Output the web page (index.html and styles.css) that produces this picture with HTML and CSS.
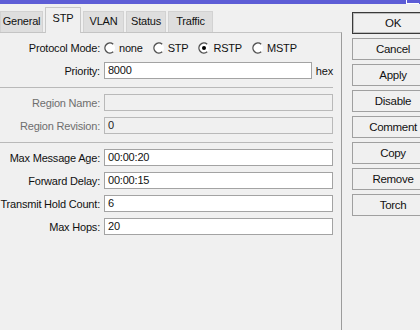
FILE: index.html
```html
<!DOCTYPE html>
<html lang="en">
<head>
  <meta charset="UTF-8">
  <title>Bridge Port - STP</title>
  <link rel="stylesheet" href="styles.css">
</head>
<body>
  <div class="titlebar">
    <span class="title-close"></span>
  </div>

  <div class="window">
    <!-- left side: tabs + form -->
    <div class="main">
      <div class="tabs">
        <div class="tab tab-general">General</div>
        <div class="tab tab-stp active">STP</div>
        <div class="tab tab-vlan">VLAN</div>
        <div class="tab tab-status">Status</div>
        <div class="tab tab-traffic">Traffic</div>
      </div>

      <div class="panel">
        <div class="row">
          <label class="label">Protocol Mode:</label>
          <div class="radios">
            <span class="radio">
              <svg width="12" height="12" viewBox="0 0 12 12"><circle cx="6" cy="6" r="5" fill="#fff"/><path d="M9.2 2.2 A5 5 0 1 0 9.2 9.8" fill="none" stroke="#505050" stroke-width="1.4"/></svg>
              none
            </span>
            <span class="radio">
              <svg width="12" height="12" viewBox="0 0 12 12"><circle cx="6" cy="6" r="5" fill="#fff"/><path d="M9.2 2.2 A5 5 0 1 0 9.2 9.8" fill="none" stroke="#505050" stroke-width="1.4"/></svg>
              STP
            </span>
            <span class="radio">
              <svg width="12" height="12" viewBox="0 0 12 12"><circle cx="6" cy="6" r="5" fill="#fff"/><path d="M9.2 2.2 A5 5 0 1 0 9.2 9.8" fill="none" stroke="#505050" stroke-width="1.4"/><circle cx="6" cy="6" r="2" fill="#000"/></svg>
              RSTP
            </span>
            <span class="radio">
              <svg width="12" height="12" viewBox="0 0 12 12"><circle cx="6" cy="6" r="5" fill="#fff"/><path d="M9.2 2.2 A5 5 0 1 0 9.2 9.8" fill="none" stroke="#505050" stroke-width="1.4"/></svg>
              MSTP
            </span>
          </div>
        </div>

        <div class="row">
          <label class="label">Priority:</label>
          <div class="field field-short">8000</div>
          <span class="unit">hex</span>
        </div>

        <div class="sep"></div>

        <div class="row disabled">
          <label class="label">Region Name:</label>
          <div class="field"></div>
        </div>
        <div class="row disabled">
          <label class="label">Region Revision:</label>
          <div class="field">0</div>
        </div>

        <div class="sep"></div>

        <div class="row">
          <label class="label">Max Message Age:</label>
          <div class="field">00:00:20</div>
        </div>
        <div class="row">
          <label class="label">Forward Delay:</label>
          <div class="field">00:00:15</div>
        </div>
        <div class="row">
          <label class="label">Transmit Hold Count:</label>
          <div class="field">6</div>
        </div>
        <div class="row">
          <label class="label">Max Hops:</label>
          <div class="field">20</div>
        </div>
      </div>
    </div>

    <!-- right side: dialog buttons -->
    <div class="actions">
      <button class="btn btn-default">OK</button>
      <button class="btn">Cancel</button>
      <button class="btn">Apply</button>
      <button class="btn">Disable</button>
      <button class="btn">Comment</button>
      <button class="btn">Copy</button>
      <button class="btn">Remove</button>
      <button class="btn">Torch</button>
    </div>
  </div>
</body>
</html>
```

FILE: styles.css
```css
body {
  margin: 0;
  background-color: #f0f0f0;
  font-family: "Liberation Sans", Arial, sans-serif;
  font-size: 11px;
  letter-spacing: -0.2px;
  color: #111;
  overflow: hidden;
}

/* window title strip */
.titlebar {
  height: 4px;
  background-color: #5d5dd6;
  display: flex;
  justify-content: flex-end;
}

.title-close {
  width: 12px;
  height: 3px;
  margin-right: 1px;
  border-left: 1px solid #fff;
  border-bottom: 1px solid #fff;
}

.window {
  display: flex;
  height: 326px;
}

.main {
  width: 342px;
  flex-shrink: 0;
  display: flex;
  flex-direction: column;
}

/* tabs */
.tabs {
  height: 28px;
  display: flex;
  align-items: flex-end;
}

.tab {
  height: 21px;
  line-height: 19px;
  text-align: center;
  background-color: #dedede;
  border: 1px solid #d2d2d2;
  border-bottom: none;
  margin-right: 2px;
  box-sizing: border-box;
}

.tab.active {
  height: 26px;
  line-height: 20px;
  background-color: #f0f0f0;
  border-color: #c8c8c8;
  margin-bottom: -1px;
  position: relative;
}

.tab-general { width: 43px; }
.tab-stp { width: 36px; }
.tab-vlan { width: 41px; }
.tab-status { width: 40px; }
.tab-traffic { width: 45px; }

/* form panel */
.panel {
  flex: 1;
  border-top: 1px solid #c4c4c4;
  border-right: 1px solid #9c9c9c;
  padding-right: 8px;
}

.row {
  display: flex;
  align-items: center;
  height: 17px;
  margin-top: 6px;
}

.label {
  width: 100px;
  margin-right: 4px;
  text-align: right;
  white-space: nowrap;
}

.field {
  width: 229px;
  height: 17px;
  box-sizing: border-box;
  border: 1px solid #a3a3a3;
  background-color: #fff;
  padding-left: 3px;
  line-height: 15px;
}

.field-short {
  width: 208px;
}

.unit {
  margin-left: 4px;
}

.disabled .label {
  color: #6e6e6e;
}

.disabled .field {
  background-color: #f0f0f0;
  border-color: #b9b9b9;
  color: #222;
}

.sep {
  height: 0;
  border-top: 1px solid #b9b9b9;
  margin-top: 8px;
}

/* radio buttons */
.radios {
  display: flex;
  align-items: center;
}

.radio {
  display: flex;
  align-items: center;
  gap: 3px;
  margin-right: 10px;
}

/* dialog buttons (cut off by the window edge) */
.actions {
  display: flex;
  flex-direction: column;
  gap: 4px;
  padding: 8px 0 0 10px;
}

.btn {
  width: 82px;
  height: 22px;
  font-family: inherit;
  font-size: 11.5px;
  letter-spacing: -0.3px;
  color: #111;
  background-color: #f0f0f0;
  border: 1px solid #a0a0a0;
  padding: 0;
}

.btn-default {
  border-color: #3a3a3a;
  box-shadow: inset 0 0 0 1px #bcbcbc;
}
```
